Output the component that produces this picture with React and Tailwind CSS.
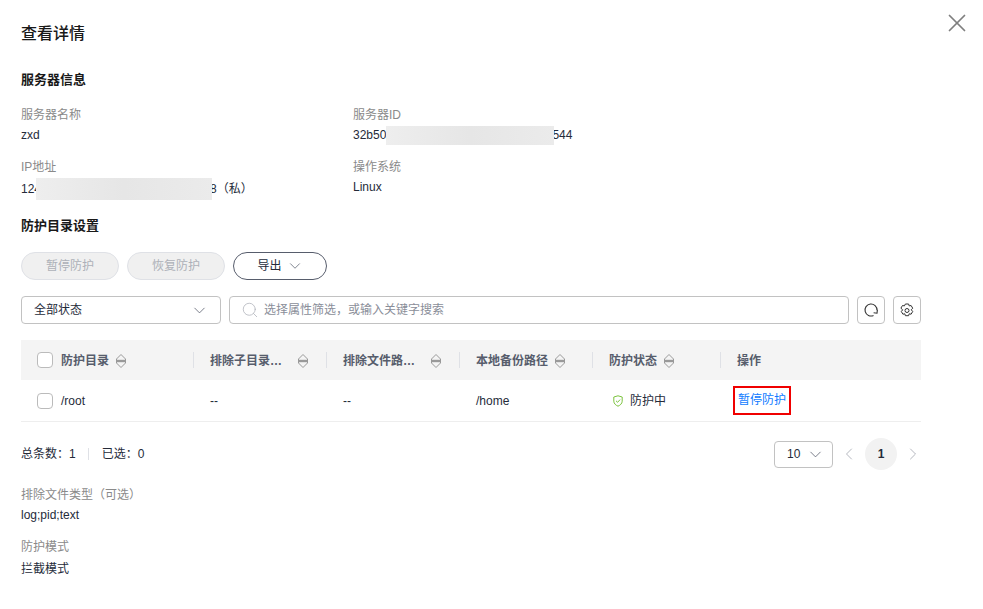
import { ChevronDown, ChevronLeft, ChevronRight, Search, X } from 'lucide-react'

const FONT = "font-['Liberation_Sans','Noto_Sans_CJK_SC',sans-serif]"

function SortIcon() {
  return (
    <svg className="w-[12px] h-[14px] shrink-0" viewBox="0 0 12 14" fill="none">
      <path d="M6 .5 10.5 5V9L6 13.5 1.5 9V5Z" stroke="#999" strokeWidth="1" strokeLinejoin="round" />
      <path d="M2 7h8" stroke="#999" strokeWidth="2.4" />
    </svg>
  )
}

function RefreshIcon() {
  return (
    <svg className="w-[16px] h-[16px]" viewBox="0 0 16 16" fill="none" stroke="#333" strokeWidth="1.1">
      <path d="M10.5 13.4A6 6 0 1 1 14 8.2" />
      <path d="M10.6 10.8 14 11.2 14.4 7.8" />
    </svg>
  )
}

function GearIcon() {
  return (
    <svg className="w-[14px] h-[15px]" viewBox="0 0 14 15" fill="none" stroke="#333" strokeWidth="1">
      <path d="M5.4 1h3.2l.6 1.9 1.9-.4 1.6 2.7-1.4 1.6 1.4 1.7-1.6 2.7-1.9-.4-.6 1.9H5.4l-.6-1.9-1.9.4-1.6-2.7 1.4-1.7L.9 5.2l1.6-2.7 1.9.4z" strokeLinejoin="round" />
      <circle cx="7" cy="7.5" r="2" />
    </svg>
  )
}

function ShieldIcon() {
  return (
    <svg className="w-[10px] h-[12px]" viewBox="0 0 10 12" fill="none" stroke="#7cc33f" strokeWidth="1">
      <path d="M5 .8 9.2 2v4.2C9.2 8.6 7 10.4 5 11.2 3 10.4.8 8.6.8 6.2V2z" strokeLinejoin="round" />
      <path d="M3 5.8 4.6 7.3 7.1 4.6" />
    </svg>
  )
}

function Checkbox() {
  return <span className="w-[16px] h-[16px] rounded-[4px] border border-[#bbbbbb] bg-white shrink-0" />
}

function Field({ label, valueClass = '', children }) {
  return (
    <div className="h-[52px]">
      <div className="h-[20px] leading-[20px] text-[#8a8a8a]">{label}</div>
      <div className={`h-[20px] leading-[20px] text-[#252b3a] flex items-center ${valueClass}`}>{children}</div>
    </div>
  )
}

function Redacted({ width, height }) {
  return (
    <span
      className="relative shrink-0 bg-gradient-to-r from-[#eeeeee] via-[#e6e6e6] to-[#ebebeb]"
      style={{ width, height }}
    />
  )
}

function HeaderCell({ title, sort, divider, spread }) {
  return (
    <div className={`relative h-full flex items-center pl-[16px] pt-[1px] gap-[6px] ${spread ? 'justify-between pr-[18px]' : 'pr-[16px]'}`}>
      <span className="font-bold text-[#575d6c] whitespace-nowrap">{title}</span>
      {sort && <SortIcon />}
      {divider && <span className="absolute right-0 top-[12px] h-[16px] w-px bg-[#dfe1e6]" />}
    </div>
  )
}

export default function App() {
  return (
    <div className={`${FONT} relative w-[983px] h-[609px] overflow-hidden bg-white text-[12px] text-[#252b3a] pl-[21px] pt-[23px]`}>
      <X className="absolute left-[942px] top-[8px] w-[30px] h-[30px] text-[#7f7f7f]" strokeWidth={1.4} />

      <div className="w-[900px]">
        <h1 className="h-[22px] leading-[22px] text-[16px] font-medium text-[#191919]">查看详情</h1>
        <h2 className="mt-[25px] h-[20px] leading-[20px] text-[13px] font-bold text-[#191919]">服务器信息</h2>

        <div className="mt-[15px] grid grid-cols-[332px_1fr]">
          <Field label="服务器名称">zxd</Field>
          <Field label="服务器ID">
            32b50<Redacted width={168} height={19} /><span className="-ml-[2px]">544</span>
          </Field>
          <Field label="IP地址" valueClass="pt-[3px]">
            124<span className="-ml-[5px]" /><Redacted width={176} height={22} /><span className="-ml-[2px]">8（私）</span>
          </Field>
          <Field label="操作系统">Linux</Field>
        </div>

        <h2 className="mt-[7px] h-[20px] leading-[20px] text-[13px] font-bold text-[#191919]">防护目录设置</h2>

        <div className="mt-[16px] flex gap-[8px]">
          <button className="w-[98px] h-[28px] rounded-full border border-[#dfe1e6] bg-[#f0f0f0] text-[#adb0b8]">暂停防护</button>
          <button className="w-[98px] h-[28px] rounded-full border border-[#dfe1e6] bg-[#f0f0f0] text-[#adb0b8]">恢复防护</button>
          <button className="w-[94px] h-[28px] rounded-full border border-[#575d6c] bg-white flex items-center justify-center gap-[4px] pl-[1px]">
            导出
            <ChevronDown className="w-[18px] h-[18px] text-[#575d6c]" strokeWidth={1} />
          </button>
        </div>

        <div className="mt-[16px] flex gap-[8px]">
          <div className="w-[200px] h-[28px] rounded-[4px] border border-[#c2c2c2] flex items-center justify-between pl-[12px] pr-[11px]">
            全部状态
            <ChevronDown className="w-[19px] h-[19px] text-[#575d6c]" strokeWidth={1} />
          </div>
          <div className="flex-1 h-[28px] rounded-[4px] border border-[#c2c2c2] flex items-center gap-[5px] pl-[11px] text-[#8a8e99]">
            <Search className="w-[18px] h-[18px] text-[#adb0b8]" strokeWidth={1} />
            选择属性筛选，或输入关键字搜索
          </div>
          <button className="w-[28px] h-[28px] rounded-[4px] border border-[#c2c2c2] flex items-center justify-center">
            <RefreshIcon />
          </button>
          <button className="w-[28px] h-[28px] rounded-[4px] border border-[#c2c2c2] flex items-center justify-center">
            <GearIcon />
          </button>
        </div>

        <div className="mt-[16px]">
          <div className="h-[40px] bg-[#f4f4f4] grid grid-cols-[173px_133px_133px_133px_128px_1fr] items-center">
            <div className="relative h-full flex items-center pl-[16px] gap-[8px]">
              <Checkbox />
              <span className="font-bold text-[#575d6c] pt-[1px]">防护目录</span>
              <span className="-ml-[2px] pt-[1px]"><SortIcon /></span>
              <span className="absolute right-0 top-[12px] h-[16px] w-px bg-[#dfe1e6]" />
            </div>
            <HeaderCell title="排除子目录…" sort divider spread />
            <HeaderCell title="排除文件路…" sort divider spread />
            <HeaderCell title="本地备份路径" sort divider />
            <HeaderCell title="防护状态" sort divider />
            <HeaderCell title="操作" />
          </div>
          <div className="h-[42px] border-b border-[#eeeeee] grid grid-cols-[173px_133px_133px_133px_128px_1fr] items-center">
            <div className="flex items-center pl-[16px] gap-[8px]">
              <Checkbox />
              /root
            </div>
            <div className="pl-[16px]">--</div>
            <div className="pl-[16px]">--</div>
            <div className="pl-[16px]">/home</div>
            <div className="pl-[20px] flex items-center gap-[7px]">
              <ShieldIcon />
              防护中
            </div>
            <div className="pl-[12px]">
              <span className="inline-block w-[58px] text-center border-2 border-[#f00000] h-[29px] leading-[25px] text-[#0f7bff]">暂停防护</span>
            </div>
          </div>
        </div>

        <div className="mt-[16px] h-[32px] flex items-center justify-between">
          <div className="flex items-center">
            总条数：1
            <span className="ml-[12px] mr-[13px] h-[12px] w-px bg-[#dfe1e6]" />
            已选：0
          </div>
          <div className="flex items-center -mr-[2px]">
            <div className="w-[59px] h-[27px] rounded-[4px] border border-[#c2c2c2] flex items-center justify-between pl-[12px] pr-[7px]">
              10
              <ChevronDown className="w-[19px] h-[19px] text-[#575d6c]" strokeWidth={1} />
            </div>
            <ChevronLeft className="ml-[6px] w-[20px] h-[20px] text-[#adb0b8]" strokeWidth={1.1} />
            <span className="ml-[6px] w-[32px] h-[32px] rounded-full bg-[#f2f2f2] flex items-center justify-center font-bold">1</span>
            <ChevronRight className="ml-[6px] w-[20px] h-[20px] text-[#adb0b8]" strokeWidth={1.1} />
          </div>
        </div>

        <div className="mt-[15px]">
          <div className="h-[20px] leading-[20px] text-[#8a8a8a]">排除文件类型（可选）</div>
          <div className="h-[20px] leading-[20px]">log;pid;text</div>
        </div>
        <div className="mt-[12px]">
          <div className="h-[20px] leading-[20px] text-[#8a8a8a]">防护模式</div>
          <div className="mt-[2px] h-[20px] leading-[20px]">拦截模式</div>
        </div>
      </div>
    </div>
  )
}
